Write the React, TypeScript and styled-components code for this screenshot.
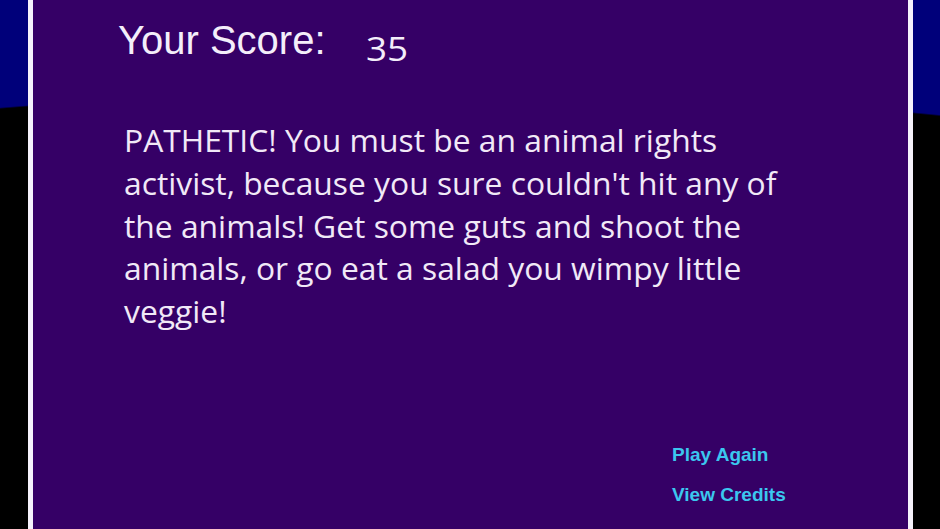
import styled, { createGlobalStyle } from "styled-components";

const GlobalStyle = createGlobalStyle`
	html,
	body {
		margin: 0;
		padding: 0;
		height: 100%;
		overflow: hidden;
	}
	body {
		background-color: #00007a;
		background-image: radial-gradient(
			1500px 413px at 430px 503px,
			#000000 99.6%,
			#00007a 100%
		);
		background-repeat: no-repeat;
	}
`;

const Screen = styled.div`
	width: 100vw;
	height: 100vh;
	box-sizing: border-box;
	padding-left: 28px;
`;

const Panel = styled.section`
	display: flex;
	flex-direction: column;
	box-sizing: border-box;
	width: 885px;
	height: 100%;
	background-color: #350066;
	border-left: 5px solid #f6f2fc;
	border-right: 5px solid #f6f2fc;
`;

const Header = styled.div`
	display: flex;
	align-items: flex-start;
	padding: 20px 0 0 85px;
`;

const Title = styled.h1`
	margin: 0;
	font-family: "Liberation Sans", Arial, sans-serif;
	font-weight: normal;
	font-size: 40px;
	line-height: 1;
	color: #f4eefa;
`;

const Score = styled.span`
	display: inline-block;
	margin: 13px 0 0 40px;
	font-family: "Open Sans", "Noto Sans", sans-serif;
	font-size: 32px;
	line-height: 1;
	color: #f4eefa;
	transform: scaleX(1.15);
	transform-origin: left center;
`;

const Message = styled.p`
	margin: 54px 0 0 91px;
	width: 672px;
	font-family: "Open Sans", "Noto Sans", sans-serif;
	font-size: 31.8px;
	line-height: 42.8px;
	color: #f1e9f7;
`;

const Actions = styled.nav`
	display: flex;
	flex-direction: column;
	align-items: flex-start;
	gap: 21px;
	margin: 112px 0 0 639px;
`;

const ActionButton = styled.button`
	padding: 0;
	border: none;
	background: none;
	cursor: pointer;
	font-family: "Liberation Sans", Arial, sans-serif;
	font-weight: bold;
	font-size: 19px;
	line-height: 1;
	color: #3bc7ef;
`;

const message =
	"PATHETIC! You must be an animal rights activist, because you sure couldn't hit any of the animals! Get some guts and shoot the animals, or go eat a salad you wimpy little veggie!";

export default function App() {
	return (
		<>
			<GlobalStyle />
			<Screen>
				<Panel>
					<Header>
						<Title>Your Score:</Title>
						<Score>35</Score>
					</Header>
					<Message>{message}</Message>
					<Actions>
						<ActionButton>Play Again</ActionButton>
						<ActionButton>View Credits</ActionButton>
					</Actions>
				</Panel>
			</Screen>
		</>
	);
}
